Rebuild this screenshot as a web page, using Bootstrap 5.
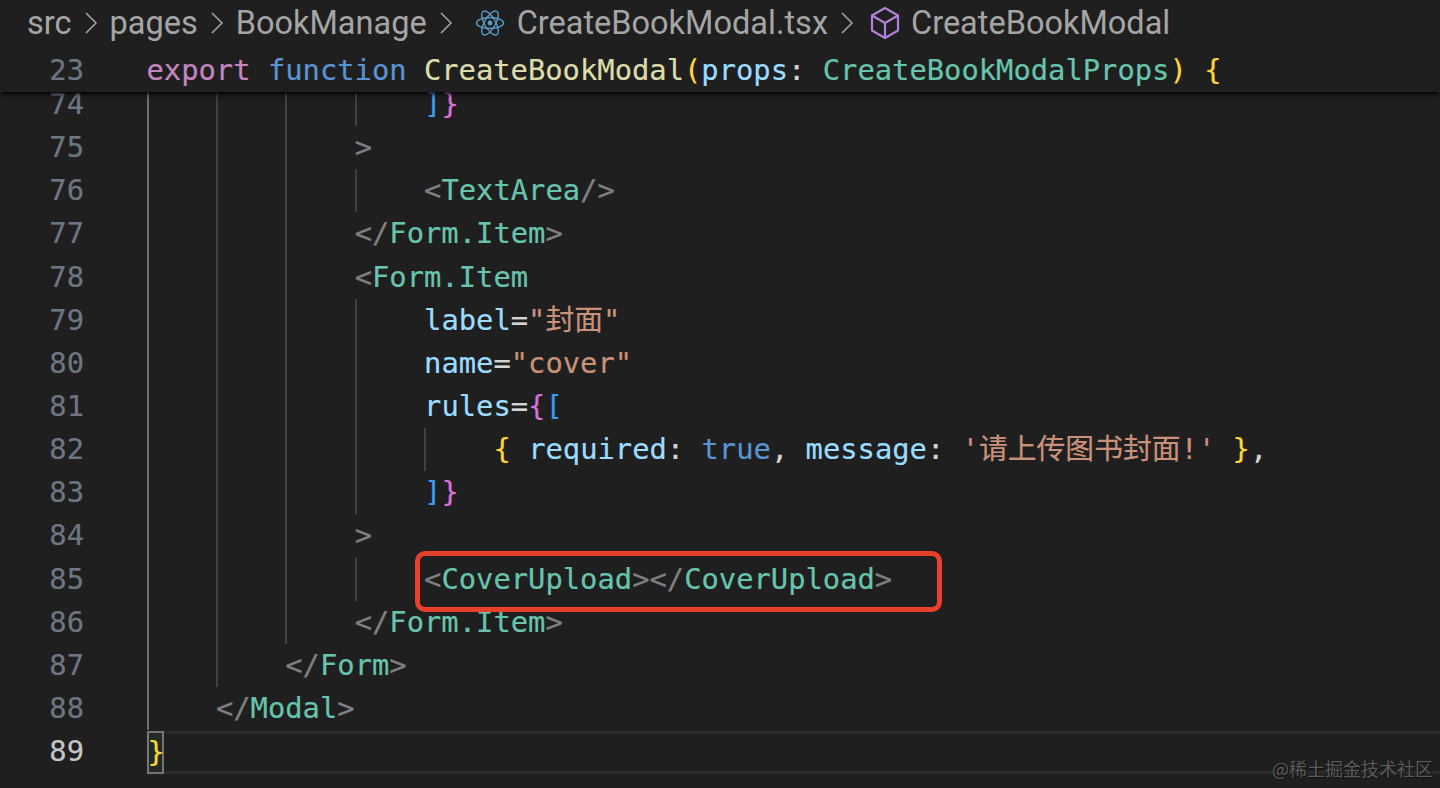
<!DOCTYPE html>
<html lang="zh">
<head>
<meta charset="utf-8">
<title>CreateBookModal.tsx</title>
<link href="https://cdn.jsdelivr.net/npm/bootstrap@5.3.0/dist/css/bootstrap.min.css" rel="stylesheet">
<style>
html,body{height:100%;background:#1f1f1f;overflow:hidden}
.editor{position:relative;height:788px;overflow:hidden;background:#1f1f1f;font-family:"DejaVu Sans Mono","Noto Sans CJK SC",monospace;font-size:28.8px;color:#d4d4d4}
.crumbs{height:46px;padding-left:27px;font-family:Roboto,"Noto Sans",sans-serif;font-size:32.5px;color:#a5a5a5;white-space:nowrap;position:relative;z-index:3;background:#1f1f1f}
.crumbs svg{flex:none}
.sep{margin:0 11px 0 12px}
.reacticon{margin:0 12px 0 10px}
.cube{margin:0 11px 0 4px}
.stick{position:relative;z-index:2;background:#1f1f1f;box-shadow:0 2px 5px #000}
.stick.ln{height:46px;line-height:49px}
.codearea{margin-top:-9px;-webkit-text-stroke:.2px}
.stick{-webkit-text-stroke:.2px}
.ln{display:flex;height:43.15px;line-height:43.15px;white-space:pre}
.num{flex:none;width:84px;margin-right:62.5px;text-align:right;color:#6e7681}
.num-on{color:#c6c6c6}
.ind{flex:none;width:69.4px;border-left:2px solid #404040}
.ind-on{border-left-color:#6f6f6f}
.cur{flex:1;position:relative}
.cur-line{border-top:3px solid #2a2a2a;border-bottom:3px solid #2a2a2a;height:43px;margin-top:1px;line-height:37px}
.bm{display:inline-block;width:17px;height:43px;margin-top:-3px;border:2px solid #757575;background:#222b22;line-height:39px;text-indent:-1px;vertical-align:top;color:#ffd43b}
.k{color:#c586c0}.b{color:#5a94d2}.f{color:#dcdcaa}.y{color:#ffd43b}.v{color:#9cdcfe}.t{color:#68c4ac}.g{color:#808080}.s{color:#c9917a}.bl{color:#3c9cf0}.p{color:#da70d6}.w{color:#d4d4d4}
.redbox{position:absolute;left:415px;top:551px;width:527px;height:61px;border:5px solid #e8402a;border-radius:10px;z-index:4}
.wm{position:absolute;right:7px;top:756px;font-family:"Noto Sans CJK SC",sans-serif;font-size:18px;line-height:24px;color:#5a5a5a;text-shadow:1px 1px 1px #111;z-index:5}
</style>
</head>
<body>
<div class="editor">
  <div class="crumbs d-flex align-items-center">
    <span>src</span>
    <svg class="sep" width="15" height="24" viewBox="0 0 15 24" fill="none" stroke="#a0a0a0" stroke-width="1.6"><path d="M2 2l10 10-10 10"/></svg>
    <span>pages</span>
    <svg class="sep" width="15" height="24" viewBox="0 0 15 24" fill="none" stroke="#a0a0a0" stroke-width="1.6"><path d="M2 2l10 10-10 10"/></svg>
    <span>BookManage</span>
    <svg class="sep" width="15" height="24" viewBox="0 0 15 24" fill="none" stroke="#a0a0a0" stroke-width="1.6"><path d="M2 2l10 10-10 10"/></svg>
    <svg class="reacticon" width="30" height="28" viewBox="0 0 30 28" fill="none" stroke="#5b9bc4" stroke-width="1.4"><ellipse cx="15" cy="14" rx="13.500" ry="5.500"/><ellipse cx="15" cy="14" rx="13.500" ry="5.500" transform="rotate(60 15 14)"/><ellipse cx="15" cy="14" rx="13.500" ry="5.500" transform="rotate(120 15 14)"/><circle cx="15" cy="14" r="2.400" fill="#5b9bc4" stroke="none"/></svg>
    <span>CreateBookModal.tsx</span>
    <svg class="sep" width="15" height="24" viewBox="0 0 15 24" fill="none" stroke="#a0a0a0" stroke-width="1.6"><path d="M2 2l10 10-10 10"/></svg>
    <svg class="cube" width="30" height="34" viewBox="0 0 30 34" fill="none" stroke="#b180d7" stroke-width="2.2" stroke-linejoin="round"><path d="M15 2l13 7.500v15L15 32 2 24.500v-15z"/><path d="M2 9.500L15 17l13-7.500M15 17v15"/></svg>
    <span>CreateBookModal</span>
  </div>
  <div class="stick ln"><span class="num">23</span><span><span class="k">export</span> <span class="b">function</span> <span class="f">CreateBookModal</span><span class="y">(</span><span class="v">props</span><span class="w">:</span> <span class="t">CreateBookModalProps</span><span class="y">)</span> <span class="y">{</span></span></div>
  <div class="codearea">
    <div class="ln"><span class="num">74</span><i class="ind ind-on"></i><i class="ind"></i><i class="ind"></i><i class="ind"></i><span><span class="bl">]</span><span class="p">}</span></span></div>
    <div class="ln"><span class="num">75</span><i class="ind ind-on"></i><i class="ind"></i><i class="ind"></i><span class="g">&gt;</span></div>
    <div class="ln"><span class="num">76</span><i class="ind ind-on"></i><i class="ind"></i><i class="ind"></i><i class="ind"></i><span><span class="g">&lt;</span><span class="t">TextArea</span><span class="g">/&gt;</span></span></div>
    <div class="ln"><span class="num">77</span><i class="ind ind-on"></i><i class="ind"></i><i class="ind"></i><span><span class="g">&lt;/</span><span class="t">Form.Item</span><span class="g">&gt;</span></span></div>
    <div class="ln"><span class="num">78</span><i class="ind ind-on"></i><i class="ind"></i><i class="ind"></i><span><span class="g">&lt;</span><span class="t">Form.Item</span></span></div>
    <div class="ln"><span class="num">79</span><i class="ind ind-on"></i><i class="ind"></i><i class="ind"></i><i class="ind"></i><span><span class="v">label</span><span class="w">=</span><span class="s">"封面"</span></span></div>
    <div class="ln"><span class="num">80</span><i class="ind ind-on"></i><i class="ind"></i><i class="ind"></i><i class="ind"></i><span><span class="v">name</span><span class="w">=</span><span class="s">"cover"</span></span></div>
    <div class="ln"><span class="num">81</span><i class="ind ind-on"></i><i class="ind"></i><i class="ind"></i><i class="ind"></i><span><span class="v">rules</span><span class="w">=</span><span class="p">{</span><span class="bl">[</span></span></div>
    <div class="ln"><span class="num">82</span><i class="ind ind-on"></i><i class="ind"></i><i class="ind"></i><i class="ind"></i><i class="ind"></i><span><span class="y">{</span> <span class="v">required</span><span class="w">:</span> <span class="b">true</span><span class="w">,</span> <span class="v">message</span><span class="w">:</span> <span class="s">'请上传图书封面!'</span> <span class="y">}</span><span class="w">,</span></span></div>
    <div class="ln"><span class="num">83</span><i class="ind ind-on"></i><i class="ind"></i><i class="ind"></i><i class="ind"></i><span><span class="bl">]</span><span class="p">}</span></span></div>
    <div class="ln"><span class="num">84</span><i class="ind ind-on"></i><i class="ind"></i><i class="ind"></i><span class="g">&gt;</span></div>
    <div class="ln"><span class="num">85</span><i class="ind ind-on"></i><i class="ind"></i><i class="ind"></i><i class="ind"></i><span><span class="g">&lt;</span><span class="t">CoverUpload</span><span class="g">&gt;&lt;/</span><span class="t">CoverUpload</span><span class="g">&gt;</span></span></div>
    <div class="ln"><span class="num">86</span><i class="ind ind-on"></i><i class="ind"></i><i class="ind"></i><span><span class="g">&lt;/</span><span class="t">Form.Item</span><span class="g">&gt;</span></span></div>
    <div class="ln"><span class="num">87</span><i class="ind ind-on"></i><i class="ind"></i><span><span class="g">&lt;/</span><span class="t">Form</span><span class="g">&gt;</span></span></div>
    <div class="ln"><span class="num">88</span><i class="ind ind-on"></i><span><span class="g">&lt;/</span><span class="t">Modal</span><span class="g">&gt;</span></span></div>
    <div class="ln"><span class="num num-on">89</span><div class="cur cur-line"><span class="bm">}</span></div></div>
  </div>
  <div class="redbox"></div>
  <div class="wm">@稀土掘金技术社区</div>
</div>
<script src="https://cdn.jsdelivr.net/npm/bootstrap@5.3.0/dist/js/bootstrap.bundle.min.js"></script>
</body>
</html>
